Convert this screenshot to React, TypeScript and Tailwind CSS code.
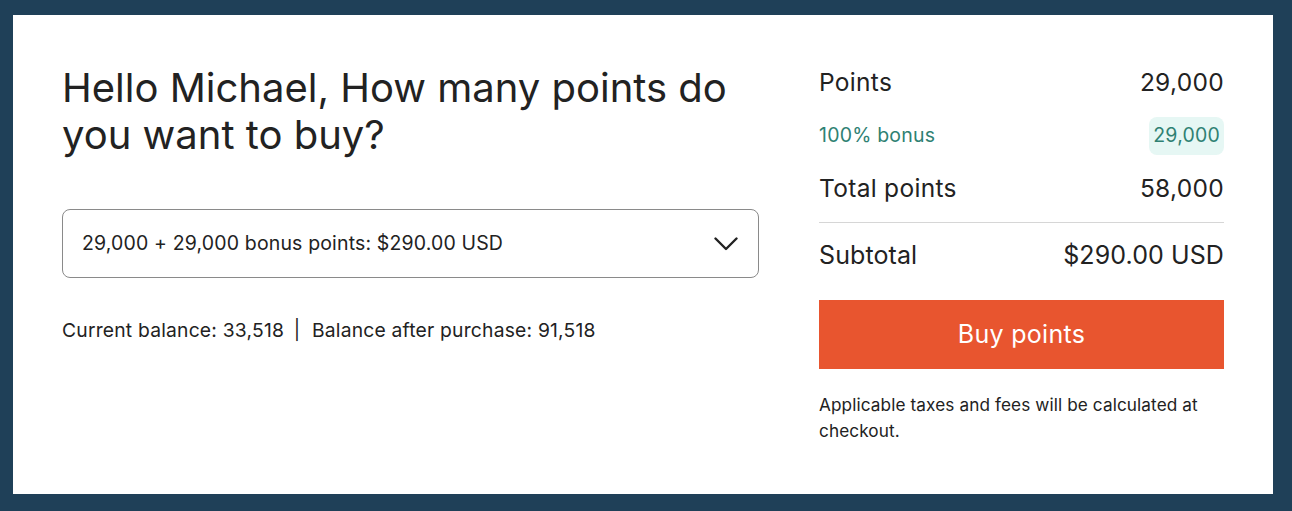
const font = { fontFamily: 'Inter, "Liberation Sans", sans-serif' };

const Row = ({ label, value }: { label: string; value: string }) => (
  <div className="flex items-center justify-between h-[53px] text-[24.5px] tracking-[0.3px] text-[#222]">
    <span>{label}</span>
    <span>{value}</span>
  </div>
);

const App = () => {
  return (
    <div className="min-h-screen bg-[#1f4058] pt-[15px] pl-[13px] pr-[19px] pb-[17px]" style={font}>
      <div className="bg-white h-[479px] flex px-[49px] pt-[50px] pb-[49px]">
        {/* Left column */}
        <div className="w-[697px] shrink-0">
          <h1 className="text-[40px] leading-[47px] text-[#222] -mt-[1px]">
            Hello Michael, How many points do you want to buy?
          </h1>

          <button className="mt-[51px] w-full h-[69px] border border-[#8a8a8a] rounded-[8px] flex items-center justify-between pl-[19px] pr-[20px] text-[19.5px] tracking-[0.15px] text-[#222]">
            <span>29,000 + 29,000 bonus points: $290.00 USD</span>
            <svg width="24" height="14" viewBox="0 0 24 14" fill="none">
              <polyline points="1.5,1.5 12,12 22.5,1.5" stroke="#222" strokeWidth="2.4" strokeLinecap="round" strokeLinejoin="round" />
            </svg>
          </button>

          <p className="mt-[38px] text-[19.3px] tracking-[0.2px] text-[#222]">
            Current balance: 33,518 <span className="ml-[4px] mr-[6px]">|</span> Balance after purchase: 91,518
          </p>
        </div>

        {/* Divider */}
        <div className="w-px bg-[#e1e1e1] mx-[30px]" />

        {/* Right column */}
        <div className="w-[405px] shrink-0 -mt-[9px]">
          <Row label="Points" value="29,000" />
          <div className="flex items-center justify-between h-[53px] pt-[1px] text-[19.5px] tracking-[0.2px] text-[#2f8173]">
            <span>100% bonus</span>
            <span className="bg-[#e6f7f4] rounded-[8px] px-[4px] h-[38px] flex items-center">29,000</span>
          </div>
          <Row label="Total points" value="58,000" />
          <div className="border-t border-[#d6d6d6] mt-[7px]" />
          <div className="flex items-center justify-between h-[65px] text-[25px] tracking-[0.1px] text-[#222]">
            <span>Subtotal</span>
            <span>$290.00 USD</span>
          </div>
          <button className="mt-[12px] w-full h-[69px] bg-[#e8552f] text-white text-[25px] tracking-[0.3px]">
            Buy points
          </button>
          <p className="mt-[23px] text-[17.2px] leading-[26px] tracking-[0.1px] text-[#222]">
            Applicable taxes and fees will be calculated at checkout.
          </p>
        </div>
      </div>
    </div>
  );
};

export default App;
